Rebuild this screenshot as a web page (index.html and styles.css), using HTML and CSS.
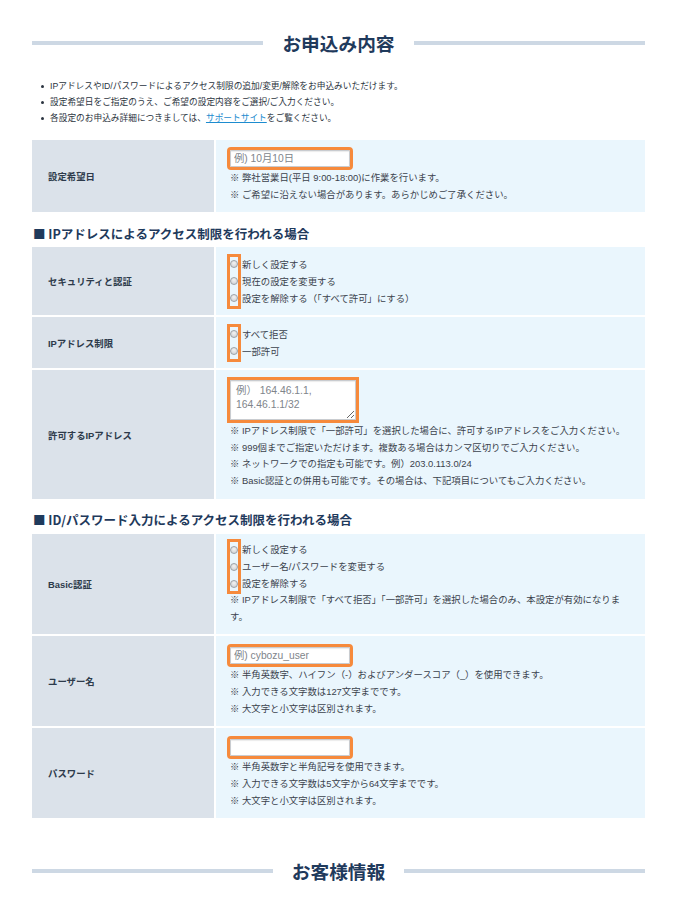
FILE: index.html
```html
<!DOCTYPE html>
<html lang="ja">
<head>
<meta charset="utf-8">
<title>お申込み内容</title>
<link rel="stylesheet" href="styles.css">
</head>
<body>
<div class="page">
  <h2 class="title"><span>お申込み内容</span></h2>

  <ul class="intro">
    <li>IPアドレスやID/パスワードによるアクセス制限の追加/変更/解除をお申込みいただけます。</li>
    <li>設定希望日をご指定のうえ、ご希望の設定内容をご選択/ご入力ください。</li>
    <li>各設定のお申込み詳細につきましては、<a href="#">サポートサイト</a>をご覧ください。</li>
  </ul>

  <div class="form-table">
    <div class="label">設定希望日</div>
    <div class="value">
      <input class="text" type="text" placeholder="例) 10月10日">
      <p class="notes">※ 弊社営業日(平日 9:00-18:00)に作業を行います。<br>※ ご希望に沿えない場合があります。あらかじめご了承ください。</p>
    </div>
  </div>

  <h3 class="subhead">■ IPアドレスによるアクセス制限を行われる場合</h3>

  <div class="form-table">
    <div class="label">セキュリティと認証</div>
    <div class="value radios-cell">
      <div class="radios">
        <label class="radio"><input type="radio" name="sec">新しく設定する</label>
        <label class="radio"><input type="radio" name="sec">現在の設定を変更する</label>
        <label class="radio"><input type="radio" name="sec">設定を解除する（「すべて許可」にする）</label>
        <span class="mark"></span>
      </div>
    </div>

    <div class="label">IPアドレス制限</div>
    <div class="value radios-cell">
      <div class="radios">
        <label class="radio"><input type="radio" name="ip">すべて拒否</label>
        <label class="radio"><input type="radio" name="ip">一部許可</label>
        <span class="mark"></span>
      </div>
    </div>

    <div class="label">許可するIPアドレス</div>
    <div class="value">
      <textarea class="area" placeholder="例） 164.46.1.1,&#10;164.46.1.1/32"></textarea>
      <p class="notes tight">※ IPアドレス制限で「一部許可」を選択した場合に、許可するIPアドレスをご入力ください。<br>※ 999個までご指定いただけます。複数ある場合はカンマ区切りでご入力ください。<br>※ ネットワークでの指定も可能です。例）203.0.113.0/24<br>※ Basic認証との併用も可能です。その場合は、下記項目についてもご入力ください。</p>
    </div>
  </div>

  <h3 class="subhead">■ ID/パスワード入力によるアクセス制限を行われる場合</h3>

  <div class="form-table">
    <div class="label">Basic認証</div>
    <div class="value radios-cell basic">
      <div class="radios">
        <label class="radio"><input type="radio" name="basic">新しく設定する</label>
        <label class="radio"><input type="radio" name="basic">ユーザー名/パスワードを変更する</label>
        <label class="radio"><input type="radio" name="basic">設定を解除する</label>
        <span class="mark"></span>
      </div>
      <p class="notes flush">※ IPアドレス制限で「すべて拒否」「一部許可」を選択した場合のみ、本設定が有効になります。</p>
    </div>

    <div class="label">ユーザー名</div>
    <div class="value lower">
      <input class="text" type="text" placeholder="例) cybozu_user">
      <p class="notes">※ 半角英数字、ハイフン（-）およびアンダースコア（_）を使用できます。<br>※ 入力できる文字数は127文字までです。<br>※ 大文字と小文字は区別されます。</p>
    </div>

    <div class="label">パスワード</div>
    <div class="value lower">
      <input class="text" type="password">
      <p class="notes">※ 半角英数字と半角記号を使用できます。<br>※ 入力できる文字数は5文字から64文字までです。<br>※ 大文字と小文字は区別されます。</p>
    </div>
  </div>

  <h2 class="title bottom"><span>お客様情報</span></h2>
</div>
</body>
</html>
```

FILE: styles.css
```css
* { box-sizing: border-box; }

html, body {
  margin: 0;
  padding: 0;
  background: #ffffff;
}

body {
  font-family: "Liberation Sans", "Noto Sans CJK JP", sans-serif;
  color: #353d47;
}

.page {
  padding: 30px 31px 40px 32px;
}

.title {
  display: flex;
  align-items: center;
  gap: 19px;
  margin: 0;
  font-family: "Noto Sans CJK JP", sans-serif;
  font-size: 18.7px;
  line-height: 26px;
  font-weight: 700;
  color: #1f3a5c;
}

.title::before,
.title::after {
  content: "";
  flex: 1;
  height: 4px;
  background: #cdd8e4;
}

.title.bottom {
  margin-top: 40px;
}

.intro {
  list-style: none;
  margin: 22px 0 14px 0;
  padding: 0 0 0 18px;
  font-size: 8.7px;
  line-height: 16px;
  color: #2b3440;
}

.intro li {
  position: relative;
}

.intro li::before {
  content: "";
  position: absolute;
  left: -9px;
  top: 6.5px;
  width: 3px;
  height: 3px;
  border-radius: 50%;
  background: #2b3440;
}

.intro a {
  color: #1d8ccf;
  text-decoration: underline;
}

.form-table {
  display: grid;
  grid-template-columns: 182px 1fr;
  gap: 2px 2px;
}

.label {
  display: flex;
  align-items: center;
  padding-left: 16px;
  background: #dbe2ea;
  font-size: 9.4px;
  font-weight: 700;
  color: #2d3a4a;
}

.value {
  background: #eaf6fd;
  padding: 10px 15px 9px 14px;
  font-size: 9.4px;
  color: #3a424c;
}

.value.lower {
  padding-top: 11px;
}

.radios-cell {
  padding-top: 8.5px;
  padding-bottom: 8.5px;
}

.radios-cell.basic {
  padding-top: 7.5px;
}

.radios {
  position: relative;
  display: flex;
  flex-direction: column;
  align-items: flex-start;
}

.radio {
  display: flex;
  align-items: center;
  gap: 4px;
  line-height: 17px;
}

.radio input {
  appearance: none;
  -webkit-appearance: none;
  margin: 0;
  width: 8px;
  height: 8px;
  border-radius: 50%;
  border: 1px solid #9da2a8;
  background: radial-gradient(circle at 50% 35%, #f2f2f2 0%, #c9ccd0 100%);
}

.mark {
  position: absolute;
  left: -3px;
  top: -2px;
  bottom: -2px;
  width: 14px;
  border: 3px solid #f68a3c;
}

.text {
  display: block;
  width: 120px;
  height: 17px;
  margin: 0;
  padding: 0 3px;
  border: 1px solid #c9ccd0;
  border-radius: 1px;
  background: #ffffff;
  box-shadow: inset 0 1px 1px rgba(0,0,0,0.08);
  outline: 3px solid #f68a3c;
  font-family: inherit;
  font-size: 10.3px;
  color: #333;
}

.text::placeholder,
.area::placeholder {
  color: #80858b;
}

.area {
  display: block;
  width: 126px;
  height: 40px;
  margin: 0;
  padding: 3px 5px;
  border: 1px solid #c9ccd0;
  background: #ffffff;
  box-shadow: inset 0 1px 1px rgba(0,0,0,0.08);
  outline: 3px solid #f68a3c;
  font-family: inherit;
  font-size: 10.4px;
  line-height: 14px;
  color: #333;
}

.notes {
  margin: 3px 0 0 0;
  font-size: 9.4px;
  line-height: 16.7px;
}

.notes.tight {
  margin-top: 2.5px;
}

.notes.flush {
  margin-top: 0;
}

.subhead {
  margin: 12.5px 0 4.5px 1px;
  font-family: "Noto Sans CJK JP", sans-serif;
  font-size: 12.5px;
  line-height: 18px;
  font-weight: 700;
  color: #1f3a5c;
}
```
